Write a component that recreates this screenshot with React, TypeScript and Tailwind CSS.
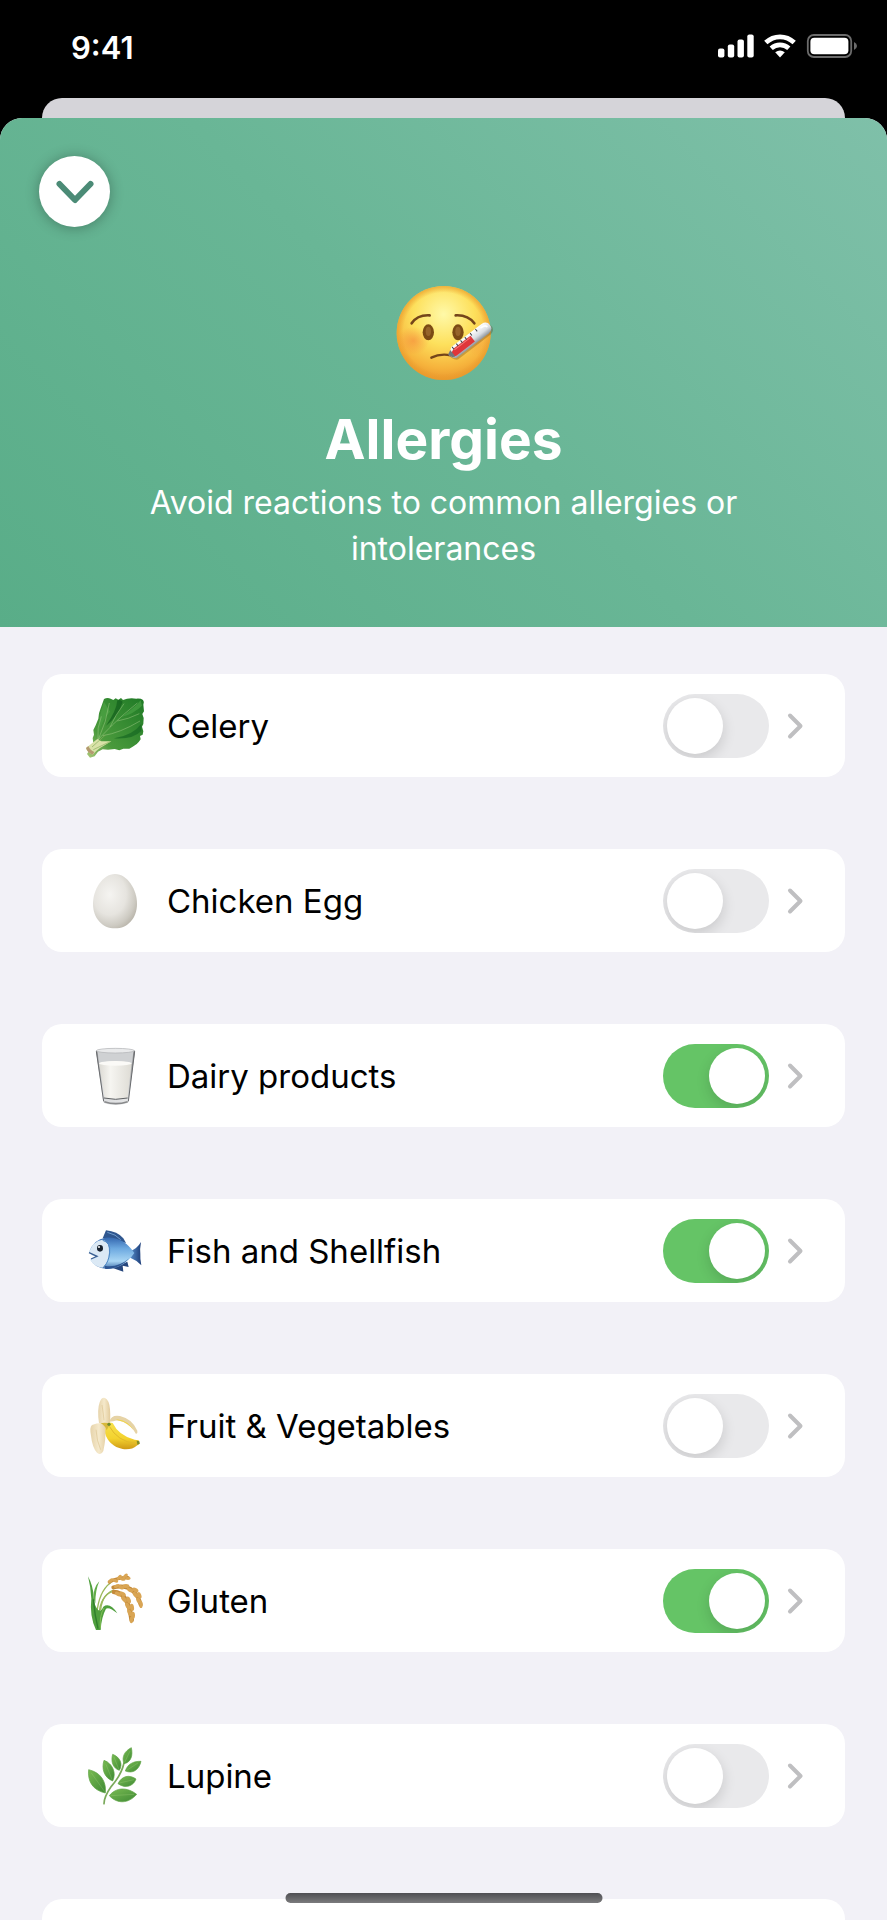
import { useState } from "react";
import type { FC } from "react";

interface Allergen {
  id: string;
  name: string;
  icon: FC;
  enabled: boolean;
}

const ICON_CLASS = "size-16 shrink-0";

const LettuceIcon = () => (
  <svg className={ICON_CLASS} viewBox="159 97 192 192" aria-hidden="true">
    <defs>
      <linearGradient id="lettuce" x1="0" y1="1" x2="1" y2="0">
        <stop offset="0%" stopColor="#a9c878" />
        <stop offset="30%" stopColor="#4a9a3c" />
        <stop offset="100%" stopColor="#1f7a26" />
      </linearGradient>
    </defs>
    <path
      d="M222 112q10-6 20-1l8 4 7-5 8 4 8-5 6 6 12-4q14-3 28 0q14-1 20 4q5 6 1 14l2 20-5 8 4 12-1 18-4 8 4 14-2 10-8 4 2 10q-10 16-24 22l-10 6-18 0-12 5-14-4-20 2-16-1-14 7-10 14-14 4-9-11 6-10 10-8 3-14-2-16 4-10-2-14 7-14 8-20 2-16 4-12z"
      fill="url(#lettuce)"
    />
    <path d="M262 116q-2 30-34 76q38-30 50-72l-8-5z" fill="#14601d" opacity="0.75" />
    <path d="M334 186q-24 34-82 44q56 4 82-22z" fill="#176822" opacity="0.7" />
    <path d="M222 120q-18 52-16 92q12-40 34-62z" fill="#4da244" opacity="0.7" />
    <path d="M332 116q-22 26-58 50q38-10 62-34z" fill="#49a144" opacity="0.7" />
    <path
      d="M186 256Q240 190 322 124M204 236Q230 180 238 124M218 222Q270 214 330 178M240 196Q256 160 282 126M262 178Q296 172 328 156M204 232Q200 200 214 164"
      fill="none"
      stroke="#b9d99a"
      strokeWidth="2"
      opacity="0.6"
    />
    <path d="M202 232L168 259q4 14 20 20q8-10 22-20l34-20-30 0z" fill="#d9e2a8" />
    <path d="M186 256L226 220M190 264L240 240" stroke="#86ad5c" strokeWidth="2" />
    <path d="M168 259q4 14 20 20l5-8q-12-4-18-18z" fill="#b49a70" />
  </svg>
);

const EggIcon = () => (
  <svg className={ICON_CLASS} viewBox="159 623 192 192" aria-hidden="true">
    <defs>
      <radialGradient id="egg" cx="0.38" cy="0.38" r="0.68">
        <stop offset="0%" stopColor="#f5f4f1" />
        <stop offset="55%" stopColor="#e6e4df" />
        <stop offset="85%" stopColor="#cdcac2" />
        <stop offset="100%" stopColor="#bbb7ad" />
      </radialGradient>
    </defs>
    <path
      d="M255 638c38 0 66 48 66 89c0 44-28 74-66 74s-66-30-66-74c0-41 28-89 66-89z"
      fill="url(#egg)"
    />
  </svg>
);

const MilkIcon = () => (
  <svg className={ICON_CLASS} viewBox="159 100 192 192" aria-hidden="true">
    <defs>
      <linearGradient id="milk" x1="0" x2="1">
        <stop offset="0%" stopColor="#dcdad4" />
        <stop offset="35%" stopColor="#f6f5f1" />
        <stop offset="100%" stopColor="#dedcd5" />
      </linearGradient>
      <linearGradient id="glass" x1="0" x2="1">
        <stop offset="0%" stopColor="#85878a" />
        <stop offset="18%" stopColor="#dcdddf" />
        <stop offset="80%" stopColor="#e4e5e6" />
        <stop offset="100%" stopColor="#77797c" />
      </linearGradient>
    </defs>
    <path d="M198 120q58-16 117 0l-20 154q-6 8-38 8t-37-8z" fill="url(#glass)" />
    <path d="M203 124q54-10 107 0l-4 34q-50-8-99 0z" fill="#cfd1d3" />
    <ellipse cx="256" cy="120" rx="57" ry="7" fill="#e9eaeb" stroke="#b0b2b5" strokeWidth="2" />
    <path d="M207 158q49-14 98 0l-13 103q-35 7-68 0z" fill="url(#milk)" />
    <ellipse cx="256" cy="158" rx="49" ry="7" fill="#fbfaf7" />
    <path d="M222 262q34 8 71 0" fill="none" stroke="#5f6163" strokeWidth="3" />
    <path d="M223 273q34 12 70 0" fill="none" stroke="#88898b" strokeWidth="5" />
    <path d="M199 122l22 150M314 122l-19 150" fill="none" stroke="#696b6e" strokeWidth="3" />
  </svg>
);

const FishIcon = () => (
  <svg className={ICON_CLASS} viewBox="159 626 192 192" aria-hidden="true">
    <defs>
      <linearGradient id="fishBody" x1="0" y1="0" x2="0" y2="1">
        <stop offset="0%" stopColor="#3568b0" />
        <stop offset="35%" stopColor="#6da9e0" />
        <stop offset="75%" stopColor="#a9d6f4" />
        <stop offset="100%" stopColor="#3b6ba8" />
      </linearGradient>
      <linearGradient id="fishTail" x1="0" x2="1">
        <stop offset="0%" stopColor="#5b93d0" />
        <stop offset="100%" stopColor="#1d3d78" />
      </linearGradient>
    </defs>
    <path d="M218 684l10-24q34 3 52 24l8 14z" fill="#2f568f" />
    <path d="M232 666q26 6 40 22" fill="none" stroke="#6f9cce" strokeWidth="3" />
    <path d="M246 772l34 12-2-18 18 4-4-16z" fill="#27477d" />
    <path d="M298 722q22-4 35-27q-4 22-2 36q-1 16 3 34q-16-16-36-24z" fill="url(#fishTail)" />
    <path
      d="M177 726q14-40 50-44q52-4 86 46q-34 48-82 48q-38-4-50-28l20-8z"
      fill="url(#fishBody)"
    />
    <path
      d="M177 726q12-34 40-38q22 4 20 38q-2 34-20 46q-26-4-36-24l22-8-16-4z"
      fill="#dbe9f5"
    />
    <path d="M218 690q24 6 21 38q-3 26-16 40" fill="none" stroke="#4e87c4" strokeWidth="3" />
    <path d="M224 766q38 8 74-22q-32 34-72 32z" fill="#2d5592" />
    <path d="M177 727l24 11-18 8" fill="none" stroke="#3a5f92" strokeWidth="4" />
    <ellipse cx="210" cy="714" rx="9" ry="10" fill="#16202d" />
    <circle cx="207" cy="710" r="3" fill="#ffffff" />
  </svg>
);

const BananaIcon = () => (
  <svg className={ICON_CLASS} viewBox="39 43 192 192" aria-hidden="true">
    <defs>
      <linearGradient id="bananaSkin" x1="0" y1="0" x2="0" y2="1">
        <stop offset="0%" stopColor="#f7e14c" />
        <stop offset="60%" stopColor="#f3d22e" />
        <stop offset="100%" stopColor="#cf9a16" />
      </linearGradient>
      <linearGradient id="bananaFlesh" x1="0" x2="1">
        <stop offset="0%" stopColor="#e6d3aa" />
        <stop offset="50%" stopColor="#f5e9cb" />
        <stop offset="100%" stopColor="#e2cb9c" />
      </linearGradient>
    </defs>
    <path d="M87 130q-6-40 2-62q6-16 16-13q13 6 15 34q2 28-1 46z" fill="url(#bananaFlesh)" />
    <path
      d="M118 126q6-22 32-17q36 8 52 44q2 8-4 10q-12-24-38-36q-18-8-30-2z"
      fill="#e6d3a6"
    />
    <path d="M138 120q34-4 60 42q-14-24-38-36z" fill="#f0d544" />
    <path
      d="M104 138q10-14 24-8q18 38 66 50l12 2 3 10-9 6q-14 13-42 10q-42-8-54-50z"
      fill="url(#bananaSkin)"
    />
    <path d="M118 140q24 44 78 52" fill="none" stroke="#e2b92a" strokeWidth="3" />
    <path d="M200 183l8 2 1 7-7 3z" fill="#7c8b2c" />
    <path
      d="M112 132q-24-6-46 4q-8 6-3 32q4 36 18 51q12 10 19-5q8-36 6-66z"
      fill="url(#bananaFlesh)"
    />
    <path d="M78 150q2 34 14 60M96 76q4 24 6 46" fill="none" stroke="#dcc694" strokeWidth="2" />
    <path d="M92 131q16-4 28 3l-10 18q-4-14-18-21z" fill="#d7b83b" />
    <circle cx="117" cy="134" r="5" fill="#6f8a2e" />
  </svg>
);

const RiceIcon = () => (
  <svg className={ICON_CLASS} viewBox="39 29 192 192" aria-hidden="true">
    <g fill="none" stroke="#9bb85b" strokeWidth="4" strokeLinecap="round">
      <path d="M80 166Q86 96 122 70" />
      <path d="M88 162Q90 112 130 92" />
      <path d="M92 150Q98 100 134 96" />
    </g>
    <path
      d="M78 212Q58 170 64 118Q62 82 54 51Q70 80 71 114L75 136Q88 168 100 142Q120 128 142 162Q118 142 108 148Q94 174 92 212z"
      fill="#4f9f3d"
    />
    <path d="M70 118Q70 84 88 66Q76 92 76 132z" fill="#62ad49" />
    <path d="M70 120Q74 166 84 208" fill="none" stroke="#2f7d2b" strokeWidth="4" />
    <path d="M91 206Q88 168 102 146" fill="none" stroke="#82bd56" strokeWidth="3" />
    <g fill="none" stroke="#c48a3a" strokeLinecap="round">
      <path d="M118 68Q144 54 174 55" strokeWidth="10" />
      <path d="M130 84Q194 70 212 136" strokeWidth="12" />
      <path d="M132 98Q174 98 185 182" strokeWidth="14" />
    </g>
    <g fill="#d9a554">
      <ellipse cx="122" cy="64" rx="9" ry="5" transform="rotate(-35 122 64)" />
      <ellipse cx="136" cy="64" rx="9" ry="5" transform="rotate(20 136 64)" />
      <ellipse cx="148" cy="54" rx="9" ry="5" transform="rotate(-45 148 54)" />
      <ellipse cx="158" cy="59" rx="9" ry="5" transform="rotate(10 158 59)" />
      <ellipse cx="166" cy="50" rx="9" ry="5" transform="rotate(-40 166 50)" />
      <ellipse cx="174" cy="57" rx="8" ry="5" />
      <ellipse cx="140" cy="80" rx="9" ry="5" transform="rotate(-25 140 80)" />
      <ellipse cx="154" cy="84" rx="9" ry="6" transform="rotate(20 154 84)" />
      <ellipse cx="168" cy="80" rx="10" ry="6" />
      <ellipse cx="180" cy="92" rx="10" ry="6" transform="rotate(30 180 92)" />
      <ellipse cx="196" cy="92" rx="10" ry="6" transform="rotate(30 196 92)" />
      <ellipse cx="196" cy="106" rx="10" ry="6" transform="rotate(50 196 106)" />
      <ellipse cx="208" cy="108" rx="10" ry="6" transform="rotate(70 208 108)" />
      <ellipse cx="206" cy="124" rx="10" ry="6" transform="rotate(60 206 124)" />
      <ellipse cx="213" cy="136" rx="10" ry="5" transform="rotate(90 213 136)" />
      <ellipse cx="144" cy="104" rx="10" ry="6" transform="rotate(30 144 104)" />
      <ellipse cx="158" cy="104" rx="10" ry="6" transform="rotate(30 158 104)" />
      <ellipse cx="162" cy="120" rx="11" ry="6" transform="rotate(50 162 120)" />
      <ellipse cx="176" cy="122" rx="11" ry="6" transform="rotate(70 176 122)" />
      <ellipse cx="173" cy="140" rx="11" ry="6" transform="rotate(60 173 140)" />
      <ellipse cx="186" cy="144" rx="11" ry="6" transform="rotate(80 186 144)" />
      <ellipse cx="179" cy="160" rx="11" ry="6" transform="rotate(65 179 160)" />
      <ellipse cx="189" cy="168" rx="11" ry="6" transform="rotate(90 189 168)" />
      <ellipse cx="184" cy="182" rx="10" ry="5" transform="rotate(90 184 182)" />
    </g>
  </svg>
);

const HerbIcon = () => (
  <svg className={ICON_CLASS} viewBox="39 31 192 192" aria-hidden="true">
    <defs>
      <linearGradient id="herb" x1="0" y1="0" x2="1" y2="1">
        <stop offset="0%" stopColor="#79bb52" />
        <stop offset="100%" stopColor="#3f8a35" />
      </linearGradient>
    </defs>
    <path
      d="M102 210q0-20 22-52q30-34 38-70"
      fill="none"
      stroke="#7aa95a"
      strokeWidth="5"
      strokeLinecap="round"
    />
    <g fill="url(#herb)" stroke="#5ea344" strokeWidth="2" strokeLinejoin="round">
      <path d="M162 90c-8-20 2-38 22-48c5 22 0 44-22 48z" />
      <path d="M148 110c-20-6-26-28-20-48c22 8 32 30 20 48z" />
      <path d="M128 142c-26-10-34-38-26-62c26 10 38 38 26 62z" />
      <path d="M106 178c-38-8-54-36-50-70c36 8 54 36 50 70z" />
      <path d="M166 112c6-20 24-30 47-29c-6 26-24 38-47 29z" />
      <path d="M144 150c12-24 34-28 54-14c-8 22-32 30-54 14z" />
      <path d="M118 186c20-26 54-26 82-4c-24 28-58 30-82 4z" />
    </g>
    <path
      d="M164 86L180 52M146 106L132 70M126 138L108 92M104 174L64 118M170 110L204 88M148 148L192 138M122 186L192 182"
      fill="none"
      stroke="#a3d47f"
      strokeWidth="2"
      opacity="0.45"
    />
  </svg>
);

const SickFaceIcon = () => (
  <svg className="size-[98px]" viewBox="43 42 294 294" aria-hidden="true">
    <defs>
      <radialGradient id="face" cx="0.5" cy="0.3" r="0.72">
        <stop offset="0%" stopColor="#fff9a8" />
        <stop offset="45%" stopColor="#fde05c" />
        <stop offset="80%" stopColor="#f6b33c" />
        <stop offset="100%" stopColor="#e8942c" />
      </radialGradient>
      <radialGradient id="faceRim">
        <stop offset="86%" stopColor="#ea9b2b" stopOpacity="0" />
        <stop offset="100%" stopColor="#ea9b2b" stopOpacity="0.7" />
      </radialGradient>
      <radialGradient id="cheek">
        <stop offset="0%" stopColor="#f5863a" stopOpacity="0.6" />
        <stop offset="100%" stopColor="#f5863a" stopOpacity="0" />
      </radialGradient>
      <linearGradient id="tube" x1="0" y1="0" x2="0" y2="1">
        <stop offset="0%" stopColor="#ffffff" />
        <stop offset="60%" stopColor="#d9dde2" />
        <stop offset="100%" stopColor="#8f969d" />
      </linearGradient>
    </defs>
    <circle cx="189" cy="189" r="141" fill="url(#face)" />
    <circle cx="189" cy="189" r="141" fill="url(#faceRim)" />
    <ellipse cx="98" cy="212" rx="48" ry="42" fill="url(#cheek)" />
    <ellipse cx="285" cy="216" rx="42" ry="42" fill="url(#cheek)" opacity="0.5" />
    <ellipse cx="143" cy="187" rx="17" ry="24" fill="#7b4a14" />
    <ellipse cx="232" cy="187" rx="17" ry="24" fill="#7b4a14" />
    <ellipse cx="143" cy="184" rx="8" ry="14" fill="#96642a" />
    <ellipse cx="232" cy="184" rx="8" ry="14" fill="#96642a" />
    <g fill="none" stroke="#74451a" strokeLinecap="round">
      <path d="M93 160Q110 134 147 136" strokeWidth="8" />
      <path d="M225 136Q262 134 281 160" strokeWidth="8" />
      <path d="M152 263Q178 250 210 256" strokeWidth="7" />
    </g>
    <g transform="translate(206 256) rotate(-37.5)">
      <path
        d="M0-2L20-13H136q18 2 18 17t-18 17H14q-8-2-14-17z"
        fill="#5c3d1c"
        opacity="0.3"
        transform="translate(0 5)"
      />
      <path d="M0-2L20-16H134q18 2 18 18t-18 18H14q-8-2-14-18z" fill="url(#tube)" />
      <path d="M4 0L24-8H86v22H16q-8-2-12-14z" fill="#e0353a" />
      <path d="M22-4H82" stroke="#f47a7a" strokeWidth="3" />
      <path
        d="M22-15v9M38-15v9M54-15v9M70-15v9M90-15v9M110-15v9"
        stroke="#3b3f45"
        strokeWidth="3"
      />
      <path d="M-2-4L12-11 12 14 4 10z" fill="#70767c" />
      <path
        d="M126-8q14 0 16 8"
        fill="none"
        stroke="#ffffff"
        strokeWidth="5"
        strokeLinecap="round"
      />
    </g>
  </svg>
);

const StatusIcons = () => (
  <div className="flex items-center gap-[10px]" aria-label="Signal, Wi-Fi and battery">
    <svg className="h-6 w-9" viewBox="0 0 36 24" fill="#ffffff" aria-hidden="true">
      <rect x="0" y="14.5" width="6.4" height="9" rx="2" />
      <rect x="9.8" y="10.5" width="6.4" height="13" rx="2" />
      <rect x="19.5" y="5.5" width="6.4" height="18" rx="2" />
      <rect x="29.3" y="0.5" width="6.4" height="23" rx="2" />
    </svg>
    <svg className="h-6 w-8" viewBox="0 0 32 24" aria-hidden="true">
      <g fill="none" stroke="#ffffff" strokeWidth="4.8">
        <path d="M1.8 8.6Q8 2.8 16 2.8T30.2 8.6" />
        <path d="M7.2 14.2Q11 10.8 16 10.8T24.8 14.2" />
      </g>
      <path d="M11.2 18.2Q16 14.6 20.8 18.2L16 23.5z" fill="#ffffff" />
    </svg>
    <svg className="h-6 w-[51px]" viewBox="0 0 51 24" aria-hidden="true">
      <rect x="1.8" y="1" width="43.4" height="22" rx="6" fill="none" stroke="#6b6b6b" strokeWidth="1.8" />
      <rect x="4.4" y="3.8" width="38" height="16.4" rx="4" fill="#ffffff" />
      <path d="M48 8q3 1.5 3 4t-3 4z" fill="#6b6b6b" />
    </svg>
  </div>
);

const initialAllergens: Allergen[] = [
  { id: "celery", name: "Celery", icon: LettuceIcon, enabled: false },
  { id: "egg", name: "Chicken Egg", icon: EggIcon, enabled: false },
  { id: "dairy", name: "Dairy products", icon: MilkIcon, enabled: true },
  { id: "fish", name: "Fish and Shellfish", icon: FishIcon, enabled: true },
  { id: "fruit", name: "Fruit & Vegetables", icon: BananaIcon, enabled: false },
  { id: "gluten", name: "Gluten", icon: RiceIcon, enabled: true },
  { id: "lupine", name: "Lupine", icon: HerbIcon, enabled: false },
];

const AllergenRow: React.FC<{ allergen: Allergen; onToggle: () => void }> = ({
  allergen,
  onToggle,
}) => {
  const Icon = allergen.icon;

  return (
    <li className="flex h-[103px] items-center rounded-[20px] bg-white pr-10 pl-[41px]">
      <Icon />
      <label htmlFor={allergen.id} className="ml-5 flex-1 text-[33px] leading-[46px] text-black">
        {allergen.name}
      </label>
      <input
        id={allergen.id}
        type="checkbox"
        role="switch"
        checked={allergen.enabled}
        onChange={onToggle}
        className="flex h-16 w-[106px] shrink-0 cursor-pointer appearance-none items-center overflow-hidden rounded-full bg-[#e9e9eb] px-1 before:size-14 before:rounded-full before:bg-white before:shadow-[0_5px_14px_rgba(0,0,0,0.14)] before:content-[''] checked:justify-end checked:bg-[#65c466]"
      />
      <button type="button" aria-label={`${allergen.name} details`} className="ml-4">
        <svg className="h-7 w-5" viewBox="0 0 20 28" aria-hidden="true">
          <path
            d="M5 3.5L15.5 14L5 24.5"
            fill="none"
            stroke="#bfbfc1"
            strokeWidth="4"
            strokeLinecap="round"
            strokeLinejoin="round"
          />
        </svg>
      </button>
    </li>
  );
};

export default function App() {
  const [allergens, setAllergens] = useState(initialAllergens);

  const handleToggle = (id: string) =>
    setAllergens((items) =>
      items.map((item) => (item.id === id ? { ...item, enabled: !item.enabled } : item))
    );

  return (
    <div className="flex h-screen flex-col overflow-hidden bg-black font-['Inter','Liberation_Sans',sans-serif]">
      <div className="flex h-[98px] shrink-0 items-start justify-between pt-7 pr-[30px] pl-[71px]">
        <time className="text-[31px] leading-10 font-semibold text-white">9:41</time>
        <div className="pt-[6px]">
          <StatusIcons />
        </div>
      </div>

      {/* Edge of the sheet underneath */}
      <div className="mx-[42px] h-5 shrink-0 rounded-t-[20px] bg-[#d5d4d9]" />

      <main className="min-h-0 flex-1 overflow-hidden rounded-t-[22px] bg-[#f2f1f7]">
        <header className="flex flex-col items-center bg-linear-[45deg] from-[#59ad88] via-[#69b696] to-[#7fc0a9] px-[39px] pt-[38px] pb-[55px] text-center text-white">
          <button
            type="button"
            aria-label="Close"
            className="flex size-[71px] items-center justify-center self-start rounded-full bg-white shadow-[0_1px_14px_rgba(0,0,0,0.3)]"
          >
            <svg className="h-6 w-10" viewBox="0 0 40 24" aria-hidden="true">
              <path
                d="M4.5 4L20 20L35.5 4"
                fill="none"
                stroke="#4b8b76"
                strokeWidth="6"
                strokeLinecap="round"
                strokeLinejoin="round"
              />
            </svg>
          </button>
          <div className="mt-[57px]">
            <SickFaceIcon />
          </div>
          <h1 className="mt-[23px] text-[55px] leading-[68px] font-bold">Allergies</h1>
          <p className="mt-[7px] max-w-[640px] text-[32px] leading-[46px]">
            Avoid reactions to common allergies or intolerances
          </p>
        </header>

        <ul className="flex flex-col gap-[72px] px-[42px] pt-[47px]">
          {allergens.map((allergen) => (
            <AllergenRow
              key={allergen.id}
              allergen={allergen}
              onToggle={() => handleToggle(allergen.id)}
            />
          ))}
          <li className="h-[103px] rounded-[20px] bg-white" />
        </ul>
      </main>

      {/* Home indicator */}
      <div className="fixed bottom-[17px] left-1/2 h-[10px] w-[317px] -translate-x-1/2 rounded-full bg-linear-to-b from-[#4f4f53] to-[#7b7b7d]" />
    </div>
  );
}
